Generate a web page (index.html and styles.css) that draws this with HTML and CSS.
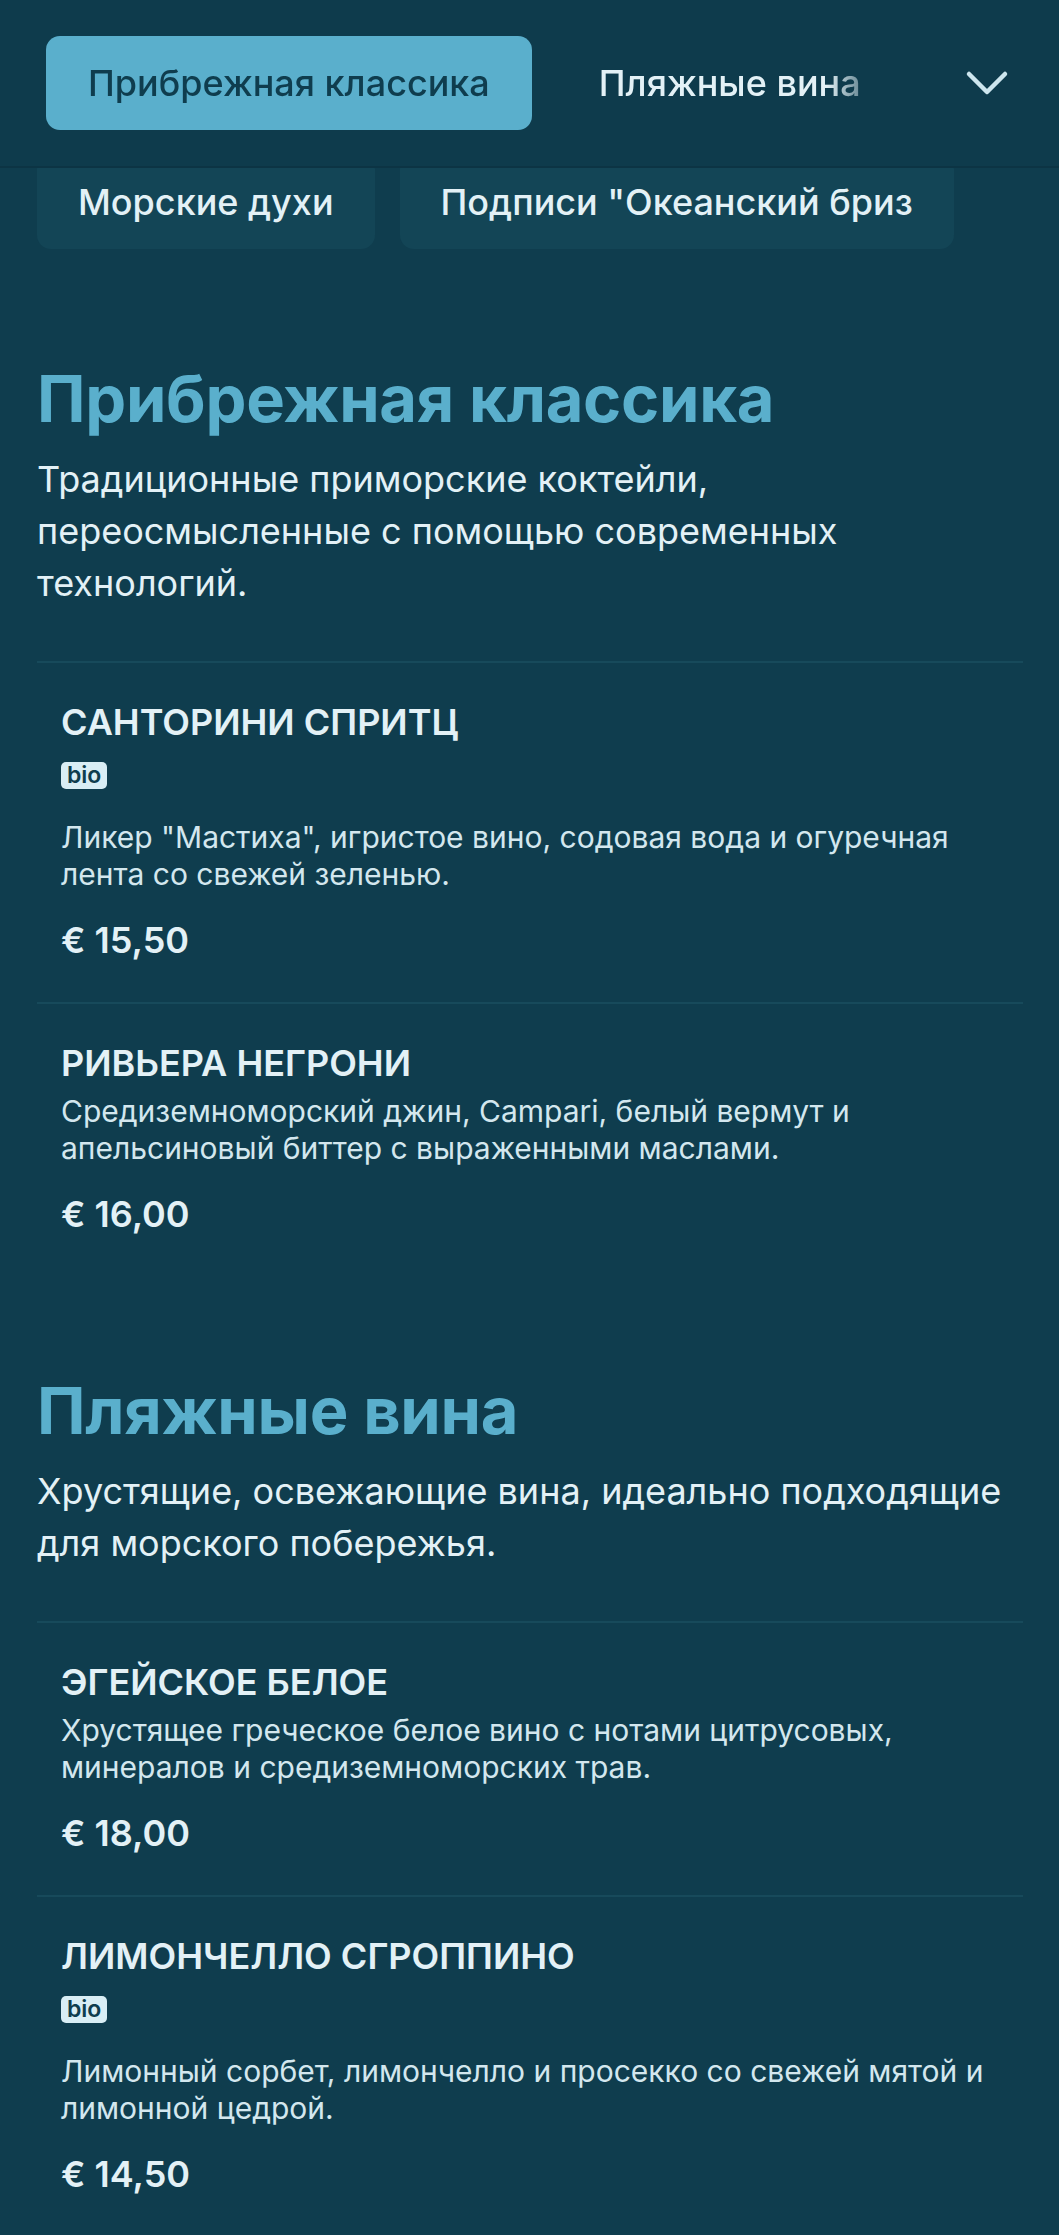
FILE: index.html
```html
<!DOCTYPE html>
<html lang="ru">
<head>
<meta charset="utf-8">
<title>Меню</title>
<link rel="stylesheet" href="styles.css">
</head>
<body>
<header class="topbar">
  <nav class="tabs">
    <a class="tab tab-active">Прибрежная классика</a>
    <a class="tab">Пляжные вина</a>
  </nav>
  <button class="toggle" aria-label="Развернуть">
    <svg width="44" height="28" viewBox="0 0 44 28"><path d="M4 5 L22 23 L40 5" fill="none" stroke="#cde6ee" stroke-width="4.5" stroke-linecap="round" stroke-linejoin="round"/></svg>
  </button>
</header>
<div class="chips">
  <a class="chip">Морские духи</a>
  <a class="chip">Подписи "Океанский бриз</a>
</div>
<main class="content">
  <section class="section section-first">
    <h2 class="section-title">Прибрежная классика</h2>
    <p class="section-desc">Традиционные приморские коктейли, переосмысленные с помощью современных технологий.</p>
    <article class="item">
      <h3 class="item-name">САНТОРИНИ СПРИТЦ</h3>
      <span class="badge">bio</span>
      <p class="item-desc">Ликер "Мастиха", игристое вино, содовая вода и огуречная лента со свежей зеленью.</p>
      <div class="price">€ 15,50</div>
    </article>
    <article class="item">
      <h3 class="item-name">РИВЬЕРА НЕГРОНИ</h3>
      <p class="item-desc">Средиземноморский джин, Campari, белый вермут и апельсиновый биттер с выраженными маслами.</p>
      <div class="price">€ 16,00</div>
    </article>
  </section>
  <section class="section">
    <h2 class="section-title">Пляжные вина</h2>
    <p class="section-desc">Хрустящие, освежающие вина, идеально подходящие для морского побережья.</p>
    <article class="item">
      <h3 class="item-name">ЭГЕЙСКОЕ БЕЛОЕ</h3>
      <p class="item-desc">Хрустящее греческое белое вино с нотами цитрусовых, минералов и средиземноморских трав.</p>
      <div class="price">€ 18,00</div>
    </article>
    <article class="item">
      <h3 class="item-name">ЛИМОНЧЕЛЛО СГРОППИНО</h3>
      <span class="badge">bio</span>
      <p class="item-desc">Лимонный сорбет, лимончелло и просекко со свежей мятой и лимонной цедрой.</p>
      <div class="price">€ 14,50</div>
    </article>
  </section>
</main>
</body>
</html>
```
FILE: styles.css
```css
* { box-sizing: border-box; }
html, body { margin: 0; padding: 0; }
body {
  background: #0f3d4e;
  font-family: Inter, "Noto Sans", "DejaVu Sans", sans-serif;
  color: #e3f1f6;
  width: 1059px;
  min-height: 2235px;
}
.topbar {
  position: relative;
  z-index: 2;
  height: 168px;
  background: #0e3b4c;
  border-bottom: 2px solid #0c3444;
  display: flex;
  align-items: center;
  padding: 0 0 0 46px;
}
.tabs {
  display: flex;
  gap: 25px;
  width: 820px;
  overflow: hidden;
  flex: none;
  -webkit-mask-image: linear-gradient(to right, #000 780px, rgba(0,0,0,0.35) 820px);
  mask-image: linear-gradient(to right, #000 780px, rgba(0,0,0,0.35) 820px);
}
.tab {
  flex: none;
  height: 94px;
  display: flex;
  align-items: center;
  padding: 0 42px;
  border-radius: 14px;
  font-size: 36px;
  font-weight: 500;
  color: #e3f1f6;
  white-space: nowrap;
}
.tab-active {
  background: #5aafcc;
  color: #0f3d4e;
}
.toggle {
  margin-left: auto;
  margin-right: 50px;
  background: none;
  border: 0;
  padding: 0;
  width: 44px;
  height: 28px;
  display: flex;
}
.chips {
  position: relative;
  z-index: 1;
  margin-top: -13px;
  display: flex;
  gap: 25px;
  padding: 0 37px;
}
.chip {
  height: 94px;
  display: flex;
  align-items: center;
  padding: 0 41px;
  border-radius: 14px;
  background: #134556;
  font-size: 36px;
  font-weight: 500;
  color: #e3f1f6;
  white-space: nowrap;
}
.content {
  padding: 0 36px 0 37px;
}
.section {
  padding-top: 99px;
}
.section-first {
  padding-top: 114px;
}
.section-title {
  margin: 0;
  font-size: 65px;
  line-height: 72px;
  font-weight: 700;
  color: #5aafcc;
  letter-spacing: -0.3px;
}
.section-desc {
  margin: 18px 0 0;
  font-size: 36px;
  line-height: 52px;
  color: #e3f1f6;
  padding-bottom: 52px;
}
.item {
  border-top: 2px solid #174a5b;
  padding: 39px 24px 42px;
}
.item-name {
  margin: 0 0 10px;
  font-size: 36px;
  line-height: 40px;
  font-weight: 600;
  color: #e3f1f6;
}
.badge {
  display: inline-block;
  margin: 10px 0 30px;
  padding: 0 6px;
  height: 27px;
  line-height: 27px;
  border-radius: 5px;
  background: #d9eef5;
  color: #0f3d4e;
  font-size: 23px;
  font-weight: 600;
  vertical-align: top;
}
.item-desc {
  margin: 0;
  font-size: 30px;
  line-height: 37px;
  color: #d3e7ee;
}
.price {
  margin-top: 27px;
  font-size: 36px;
  line-height: 40px;
  font-weight: 600;
  color: #e3f1f6;
}
```
